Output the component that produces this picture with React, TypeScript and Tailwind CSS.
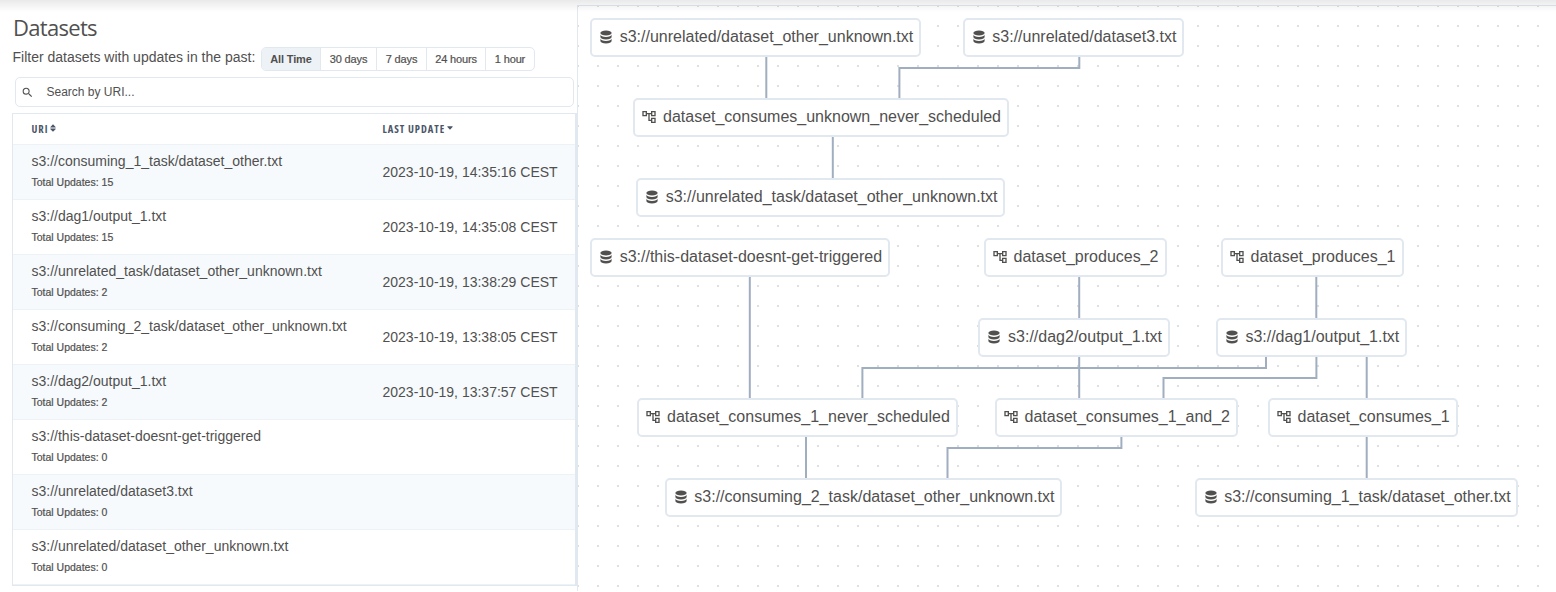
import { HiDatabase } from 'react-icons/hi';
import { MdOutlineAccountTree, MdSearch } from 'react-icons/md';
import { TiArrowSortedDown, TiArrowUnsorted } from 'react-icons/ti';

type Dataset = { uri: string; updates: number; last?: string };

const datasets: Dataset[] = [
  { uri: 's3://consuming_1_task/dataset_other.txt', updates: 15, last: '2023-10-19, 14:35:16 CEST' },
  { uri: 's3://dag1/output_1.txt', updates: 15, last: '2023-10-19, 14:35:08 CEST' },
  { uri: 's3://unrelated_task/dataset_other_unknown.txt', updates: 2, last: '2023-10-19, 13:38:29 CEST' },
  { uri: 's3://consuming_2_task/dataset_other_unknown.txt', updates: 2, last: '2023-10-19, 13:38:05 CEST' },
  { uri: 's3://dag2/output_1.txt', updates: 2, last: '2023-10-19, 13:37:57 CEST' },
  { uri: 's3://this-dataset-doesnt-get-triggered', updates: 0 },
  { uri: 's3://unrelated/dataset3.txt', updates: 0 },
  { uri: 's3://unrelated/dataset_other_unknown.txt', updates: 0 },
];

const ranges = [
  { label: '30 days', width: 'w-[56px]' },
  { label: '7 days', width: 'w-[50px]' },
  { label: '24 hours', width: 'w-[59px]' },
  { label: '1 hour', width: 'w-[49px]' },
];

type GraphNode = { kind: 'dataset' | 'dag'; label: string; x: number; y: number; w: number };

// Positions are relative to the graph canvas.
const nodes: GraphNode[] = [
  { kind: 'dataset', label: 's3://unrelated/dataset_other_unknown.txt', x: 13, y: 13, w: 331 },
  { kind: 'dataset', label: 's3://unrelated/dataset3.txt', x: 385.6, y: 13, w: 221.5 },
  { kind: 'dag', label: 'dataset_consumes_unknown_never_scheduled', x: 56.3, y: 93, w: 376 },
  { kind: 'dataset', label: 's3://unrelated_task/dataset_other_unknown.txt', x: 59, y: 173, w: 369 },
  { kind: 'dataset', label: 's3://this-dataset-doesnt-get-triggered', x: 13, y: 233, w: 300 },
  { kind: 'dag', label: 'dataset_produces_2', x: 406.8, y: 233, w: 183 },
  { kind: 'dag', label: 'dataset_produces_1', x: 643.8, y: 233, w: 183 },
  { kind: 'dataset', label: 's3://dag2/output_1.txt', x: 401.4, y: 313, w: 192 },
  { kind: 'dataset', label: 's3://dag1/output_1.txt', x: 638.7, y: 313, w: 191.7 },
  { kind: 'dag', label: 'dataset_consumes_1_never_scheduled', x: 60.3, y: 393, w: 321 },
  { kind: 'dag', label: 'dataset_consumes_1_and_2', x: 417.8, y: 393, w: 243 },
  { kind: 'dag', label: 'dataset_consumes_1', x: 690.8, y: 393, w: 190 },
  { kind: 'dataset', label: 's3://consuming_2_task/dataset_other_unknown.txt', x: 87.6, y: 473, w: 397.5 },
  { kind: 'dataset', label: 's3://consuming_1_task/dataset_other.txt', x: 617.5, y: 473, w: 323.7 },
];

const edges = [
  'M189.3 52V93',
  'M502.3 52V63H322.4V93',
  'M255.8 132V173',
  'M172.8 272V393',
  'M502.2 272V313',
  'M739.3 272V313',
  'M502.2 352V393',
  'M689 352V363H285.4V393',
  'M739.4 352V373H586.5V393',
  'M789.7 352V393',
  'M229 432V473',
  'M544.4 432V443H370.5V473',
  'M789.7 432V473',
];

function DatasetsPanel() {
  return (
    <section className="flex w-[577px] shrink-0 flex-col pl-3">
      <h1 className="mt-[12px] h-[30px] pl-px font-['Open_Sans',sans-serif] text-[22px] leading-[30px] tracking-[-0.7px]">
        Datasets
      </h1>
      <div className="mt-[5px] flex h-6 items-start">
        <span className="w-[249px] whitespace-nowrap pl-[0.5px] text-[14px] leading-5">
          Filter datasets with updates in the past:
        </span>
        <div className="flex h-6 overflow-hidden rounded-[5px] border border-[#e2e8f0] text-[11px] leading-[23px]">
          <button className="w-[58px] bg-[#edf2f7] text-center font-bold tracking-[-0.15px]">All Time</button>
          {ranges.map((r) => (
            <button
              key={r.label}
              className={`${r.width} border-l border-[#e2e8f0] text-center tracking-[-0.15px] [-webkit-text-stroke:0.2px]`}
            >
              {r.label}
            </button>
          ))}
        </div>
      </div>
      <label className="ml-[3px] mr-[3px] mt-[6px] flex h-[30px] items-center rounded-[5px] border border-[#e2e8f0] pl-[5px]">
        <MdSearch className="size-[13px]" />
        <span className="ml-[12.5px] text-[12px]">Search by URI...</span>
      </label>
      <div className="mt-[6px] flex h-[473px] flex-col border border-r-2 border-[#e2e8f0]">
        <div className="flex h-[30px] shrink-0 items-center font-['Open_Sans',sans-serif] text-[10.5px] font-bold tracking-[0.95px] text-[#4a5568] [font-stretch:75%]">
          <div className="flex w-[351px] items-center pl-[18.5px]">
            <span className="pt-px">URI</span>
            <TiArrowUnsorted className="-mt-[3px] size-[10px]" />
          </div>
          <div className="flex items-center pl-[18.5px]">
            <span className="pt-px">LAST UPDATE</span>
            <TiArrowSortedDown className="-mt-[3px] size-[10px]" />
          </div>
        </div>
        {datasets.map((d) => (
          <div
            key={d.uri}
            className="flex h-[55px] shrink-0 items-center border-t border-[#edf2f7] odd:bg-white even:bg-[#f6fafd] last:h-[56px] last:border-b"
          >
            <div className="w-[351px] pb-[2px] pl-[18.5px]">
              <div className="text-[14px] leading-[21px]">{d.uri}</div>
              <div className="text-[10.5px] leading-[20px] [-webkit-text-stroke:0.2px]">Total Updates: {d.updates}</div>
            </div>
            <div className="whitespace-nowrap pl-[18.5px] pt-px text-[14px]">{d.last}</div>
          </div>
        ))}
      </div>
    </section>
  );
}

function Graph() {
  return (
    <section className="relative mt-[5px] h-[586px] flex-1 overflow-hidden border-l border-t border-[#e2e8f0]">
      <svg className="absolute -left-px -top-px" width="979" height="586">
        <defs>
          <pattern id="dots" width="20" height="20" patternUnits="userSpaceOnUse">
            <rect width="2" height="2" fill="#dfdfe0" />
          </pattern>
        </defs>
        <rect width="979" height="586" fill="url(#dots)" />
        {edges.map((d) => (
          <path key={d} d={d} fill="none" stroke="#a0aec0" strokeWidth="2" />
        ))}
      </svg>
      <div className="absolute -left-px -top-px">
        {nodes.map((n) => (
          <div
            key={n.label}
            className="absolute flex h-[39px] items-center whitespace-nowrap rounded-[5px] border-2 border-[#e2e8f0] bg-white pl-[6px] text-[16px]"
            style={{ left: n.x, top: n.y, width: n.w }}
          >
            {n.kind === 'dataset' ? (
              <HiDatabase className="-mt-px size-4 shrink-0" />
            ) : (
              <MdOutlineAccountTree className="-mt-px size-4 shrink-0" />
            )}
            <span className="-mt-0.5 ml-[5.7px]">{n.label}</span>
          </div>
        ))}
      </div>
    </section>
  );
}

export default function App() {
  return (
    <main className="relative flex h-[592px] w-[1556px] overflow-hidden bg-white font-['Liberation_Sans',Arial,sans-serif] text-[#51504f]">
      <DatasetsPanel />
      <Graph />
      <div className="pointer-events-none absolute inset-x-0 top-0 h-[12px] bg-linear-to-b from-black/[0.085] to-transparent" />
    </main>
  );
}
